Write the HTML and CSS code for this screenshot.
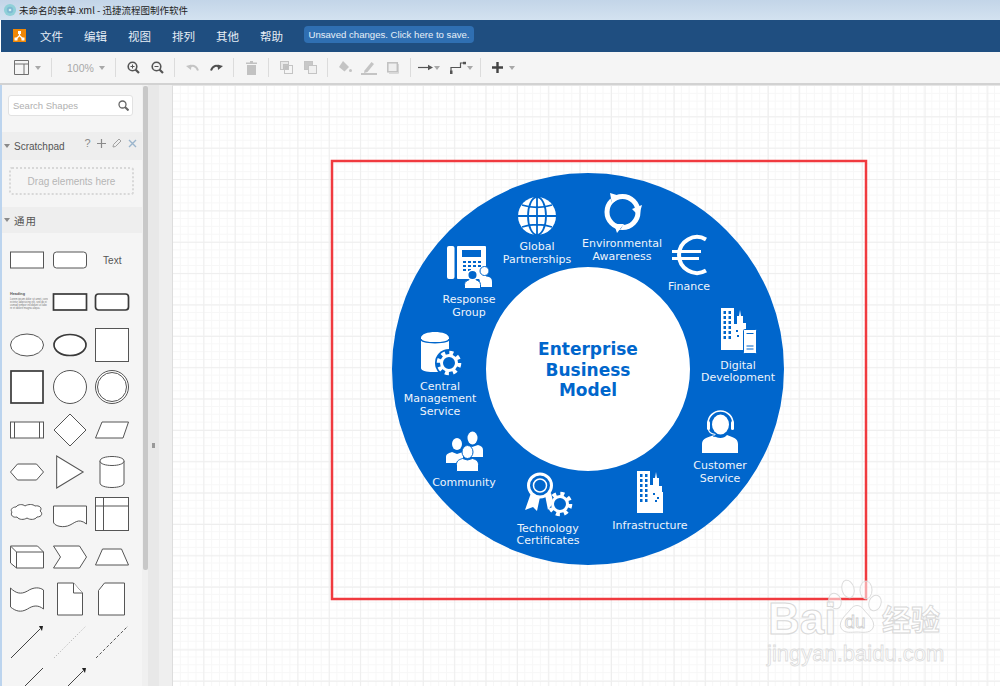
FILE: index.html
```html
<!DOCTYPE html>
<html lang="zh">
<head>
<meta charset="utf-8">
<title>未命名的表单.xml - 迅捷流程图制作软件</title>
<link rel="stylesheet" href="styles.css">
</head>
<body>
<div class="app">
  <header class="titlebar">
    <svg class="app-icon" width="14" height="14" viewBox="0 0 15 15"><circle cx="7.5" cy="7.5" r="6.5" fill="#8fd0d8"/><circle cx="7.5" cy="7.5" r="3.4" fill="#7fb9d2"/><circle cx="7.5" cy="7.5" r="1.4" fill="#d5eef2"/></svg>
    <span>未命名的表单.xml - 迅捷流程图制作软件</span>
  </header>
  <nav class="menubar">
    <svg class="logo" width="13" height="13" viewBox="0 0 13 13"><rect width="13" height="13" fill="#f08705"/><path d="M6.5 3.5V6.5M6.5 6.5L3 10M6.5 6.5L10 10" stroke="#fff" stroke-width="1.2" fill="none"/><rect x="5" y="2" width="3" height="3" fill="#fff"/><rect x="1.5" y="8.5" width="3" height="3" fill="#fff"/><rect x="8.5" y="8.5" width="3" height="3" fill="#fff"/></svg>
    <ul class="menu">
      <li>文件</li><li>编辑</li><li>视图</li><li>排列</li><li>其他</li><li>帮助</li>
    </ul>
    <button class="save-btn">Unsaved changes. Click here to save.</button>
  </nav>
  <div class="toolbar">
    <div class="tb w-view">
      <svg width="15" height="15" viewBox="0 0 15 15"><path d="M.5.5h14v14H.5zM.5 4h14M10 4v10.500" fill="none" stroke="#707070"/></svg><i class="caret"></i>
    </div>
    <i class="sep"></i>
    <div class="tb w-zoom"><span class="zoom-text">100%</span><i class="caret"></i></div>
    <i class="sep"></i>
    <div class="tb"><svg width="13" height="13" viewBox="0 0 13 13"><circle cx="5.500" cy="5.500" r="4.300" fill="none" stroke="#555" stroke-width="1.600"/><path d="M8.500 8.500L12 12" stroke="#555" stroke-width="2.200"/><path d="M3.500 5.500h4M5.500 3.500v4" stroke="#555"/></svg></div>
    <div class="tb"><svg width="13" height="13" viewBox="0 0 13 13"><circle cx="5.500" cy="5.500" r="4.300" fill="none" stroke="#555" stroke-width="1.600"/><path d="M8.500 8.500L12 12" stroke="#555" stroke-width="2.200"/><path d="M3.500 5.500h4" stroke="#555"/></svg></div>
    <i class="sep"></i>
    <div class="tb"><svg width="13" height="9" viewBox="0 0 13 9"><path d="M3.500 4.500C6 1.800 10 2 12 7.500" fill="none" stroke="#c4c4c4" stroke-width="2"/><path d="M0 3l5.500-1.500L5 7z" fill="#c4c4c4"/></svg></div>
    <div class="tb"><svg width="13" height="9" viewBox="0 0 13 9"><path d="M9.500 4.500C7 1.800 3 2 1 7.500" fill="none" stroke="#4f4f4f" stroke-width="2"/><path d="M13 3L7.500 1.500 8 7z" fill="#4f4f4f"/></svg></div>
    <i class="sep"></i>
    <div class="tb"><svg width="11" height="14" viewBox="0 0 11 14"><path d="M0 1.500h11v1.500H0zM4 0h3v1.500H4zM1 4h9v10H1z" fill="#c2c2c2"/></svg></div>
    <i class="sep"></i>
    <div class="tb"><svg width="13" height="13" viewBox="0 0 13 13"><rect x=".5" y=".5" width="8" height="8" fill="#e8e8e8" stroke="#c4c4c4"/><rect x="3" y="3" width="5.500" height="5.500" fill="#c0c0c0"/><rect x="4.500" y="4.500" width="8" height="8" fill="none" stroke="#c4c4c4"/></svg></div>
    <div class="tb"><svg width="13" height="13" viewBox="0 0 13 13"><rect x=".5" y=".5" width="8" height="8" fill="#c8c8c8" stroke="#c4c4c4"/><rect x="4.500" y="4.500" width="8" height="8" fill="#f0f0f0" stroke="#c4c4c4"/></svg></div>
    <i class="sep"></i>
    <div class="tb"><svg width="13" height="13" viewBox="0 0 13 13"><path d="M4 0l6 6-4.500 4.500L0 6z" fill="#c4c4c4"/><circle cx="11.500" cy="9.500" r="1.500" fill="#c4c4c4"/></svg></div>
    <div class="tb"><svg width="16" height="14" viewBox="0 0 16 14"><path d="M3.500 9.500L10.500 1l2.500 2-6.500 8L3 12z" fill="#c4c4c4"/><path d="M0 13h16" stroke="#c4c4c4" stroke-width="2"/></svg></div>
    <div class="tb"><svg width="12" height="12" viewBox="0 0 12 12"><rect x=".8" y=".8" width="9.500" height="9" fill="#efefef" stroke="#c0c0c0" stroke-width="1.500"/><path d="M2 11.300h9.500V2" fill="none" stroke="#d4d4d4"/></svg></div>
    <i class="sep"></i>
    <div class="tb w-arrow"><svg width="15" height="7" viewBox="0 0 15 7"><path d="M0 3.500h11" stroke="#555" stroke-width="1.200"/><path d="M10 .8l5 2.700-5 2.700z" fill="#555"/></svg><i class="caret"></i></div>
    <div class="tb w-way"><svg width="16" height="13" viewBox="0 0 16 13"><path d="M1 12V6.500h9.500V2H15" fill="none" stroke="#555" stroke-width="1.200"/><rect y="9.500" width="2.500" height="3.500" fill="#555"/><rect x="13" y=".8" width="3" height="2.500" fill="#555"/></svg><i class="caret"></i></div>
    <i class="sep"></i>
    <div class="tb w-plus"><svg width="11" height="11" viewBox="0 0 11 11"><path d="M5.500 0v11M0 5.500h11" stroke="#444" stroke-width="2.400"/></svg><i class="caret"></i></div>
  </div>
  <main class="main">
    <aside class="sidebar">
      <div class="search">
        <span>Search Shapes</span>
        <svg width="11" height="11" viewBox="0 0 11 11"><circle cx="4.500" cy="4.500" r="3.500" fill="none" stroke="#666" stroke-width="1.300"/><path d="M7 7l3.500 3.500" stroke="#666" stroke-width="2"/></svg>
      </div>
      <section class="group-head scratch-head">
        <i class="tri"></i><span>Scratchpad</span>
        <div class="scratch-tools">
          <span>?</span>
          <svg width="9" height="9" viewBox="0 0 9 9"><path d="M4.500 0v9M0 4.500h9" stroke="#8a8a8a" stroke-width="1.200"/></svg>
          <svg width="10" height="10" viewBox="0 0 10 10"><path d="M1 9l.5-2.500L7 1l2 2-5.500 5.500z" fill="none" stroke="#a0a0a0"/></svg>
          <svg width="9" height="9" viewBox="0 0 9 9"><path d="M1 1l7 7M8 1L1 8" stroke="#9bb5cc" stroke-width="1.400"/></svg>
        </div>
      </section>
      <div class="dropzone">Drag elements here</div>
      <section class="group-head general-head"><i class="tri"></i><span class="cjk">通用</span></section>
      <div class="shapes">
        <svg class="shape" viewBox="0 0 42 42"><rect x="4.500" y="13" width="33" height="16"/></svg>
        <svg class="shape" viewBox="0 0 42 42"><rect x="4.500" y="13" width="33" height="16" rx="3"/></svg>
        <div class="shape-text">Text</div>

        <svg class="shape" viewBox="0 0 42 42"><text class="tiny-h" x="4" y="14">Heading</text><text class="tiny" x="4" y="19">Lorem ipsum dolor sit amet, cons</text><text class="tiny" x="4" y="22">ectetur adipisicing elit, sed do ei</text><text class="tiny" x="4" y="25">usmod tempor incididunt ut labo</text><text class="tiny" x="4" y="28">re et dolore magna aliqua.</text></svg>
        <svg class="shape" viewBox="0 0 42 42"><rect class="thick" x="4.500" y="13" width="33" height="16"/></svg>
        <svg class="shape" viewBox="0 0 42 42"><rect class="thick" x="4.500" y="13" width="33" height="16" rx="3"/></svg>

        <svg class="shape" viewBox="0 0 42 42"><ellipse cx="21" cy="21" rx="16.500" ry="11"/></svg>
        <svg class="shape" viewBox="0 0 42 42"><ellipse class="thick" cx="21" cy="21" rx="16" ry="10.500"/></svg>
        <svg class="shape" viewBox="0 0 42 42"><rect x="4.500" y="4.500" width="33" height="33"/></svg>

        <svg class="shape" viewBox="0 0 42 42"><rect class="thick" x="5" y="5" width="32" height="32"/></svg>
        <svg class="shape" viewBox="0 0 42 42"><circle cx="21" cy="21" r="16.500"/></svg>
        <svg class="shape" viewBox="0 0 42 42"><circle cx="21" cy="21" r="16.500"/><circle cx="21" cy="21" r="14.500"/></svg>

        <svg class="shape" viewBox="0 0 42 42"><rect x="4.500" y="13" width="33" height="16"/><path d="M8.500 13v16M33.500 13v16"/></svg>
        <svg class="shape" viewBox="0 0 42 42"><path d="M21 5l16 16-16 16L5 21z"/></svg>
        <svg class="shape" viewBox="0 0 42 42"><path d="M4.500 29L11 13h26.500L32 29z"/></svg>

        <svg class="shape" viewBox="0 0 42 42"><path d="M4.500 21l7-8h19l7 8-7 8h-19z"/></svg>
        <svg class="shape" viewBox="0 0 42 42"><path d="M8 5l26 16L8 37z" transform="translate(-.500 0) scale(1.020 1)"/></svg>
        <svg class="shape" viewBox="0 0 42 42"><path d="M9 10c0-6 24-6 24 0v22c0 6-24 6-24 0z"/><path d="M9 10c0 6 24 6 24 0"/></svg>

        <svg class="shape" viewBox="0 0 42 42"><path d="M10 14c2-3 7-3 9-1 3-2 8-2 10 0 4-1 8 2 5 5 3 2 2 6-3 6-2 3-7 3-10 1-3 2-8 2-10-1-4 1-7-2-5-5-2-2 0-5 4-5z"/></svg>
        <svg class="shape" viewBox="0 0 42 42"><path d="M4.500 13h33v18c-9-7-12 0-19 2s-14-1-14-4z"/></svg>
        <svg class="shape" viewBox="0 0 42 42"><rect x="4.500" y="4.500" width="33" height="33"/><path d="M12.500 4.500v33M4.500 13h33"/></svg>

        <svg class="shape" viewBox="0 0 42 42"><path d="M4.500 10h27l6 6v16h-27l-6-5z"/><path d="M4.500 10l6 6v16M10.500 16h27"/></svg>
        <svg class="shape" viewBox="0 0 42 42"><path d="M4.500 10h26l7 11-7 11h-26l7-11z"/></svg>
        <svg class="shape" viewBox="0 0 42 42"><path d="M4.500 29l7-16h19l7 16z"/></svg>

        <svg class="shape" viewBox="0 0 42 42"><path d="M4.500 10c5 5 10 7 17 3 6-4 12-4 16-1v19c-5-4-10-4-16 0-7 4-12 2-17-2z"/></svg>
        <svg class="shape" viewBox="0 0 42 42"><path d="M8.500 5h16l9 10v22h-25z"/><path d="M24.500 5v10h9"/></svg>
        <svg class="shape" viewBox="0 0 42 42"><path d="M17.500 5h20v32h-26V12.500z" transform="translate(-4 0)"/></svg>

        <svg class="shape" viewBox="0 0 42 42"><path class="line" d="M5 37L34 8"/><path class="head" d="M34 5l4 0-1 5-2-3z" transform="translate(-1 0)"/></svg>
        <svg class="shape" viewBox="0 0 42 42"><path class="dotted" d="M5 37L37 5"/></svg>
        <svg class="shape" viewBox="0 0 42 42"><path class="dashed" d="M5 37L37 5"/></svg>

        <svg class="shape" viewBox="0 0 42 42"><path class="line" d="M5 37L37 5"/></svg>
        <svg class="shape" viewBox="0 0 42 42"><path class="line" d="M5 37L34 8"/><path class="head" d="M34 5l4 0-1 5-2-3z" transform="translate(-1 0)"/></svg>
      </div>
    </aside>
    <div class="scrollbar"><div class="thumb"></div></div>
    <div class="splitter"><i class="grip"></i></div>
    <div class="margin"></div>
    <div class="canvas">
      <svg class="diagram" viewBox="172 86 828 600" width="828" height="600">
        <defs>
          <g id="gear">
            <circle r="9.800" class="gear-teeth"/>
            <circle r="7.500" class="gear-ring"/>
          </g>
        </defs>
        <rect class="frame" x="332" y="161" width="534" height="438"/>
        <circle class="ring" cx="588" cy="369" r="149"/>

        <!-- Global -->
        <g>
          <circle cx="537" cy="216" r="19" fill="#fff"/>
          <g class="cut">
            <ellipse cx="537" cy="216" rx="9" ry="19"/>
            <path d="M537 197v38M518 216h38M522 205c9 3 21 3 30 0M522 227c9-3 21-3 30 0"/>
          </g>
        </g>
        <!-- Recycle -->
        <g>
          <circle class="wstroke" cx="622.500" cy="212" r="15.500" stroke-width="5"/>
          <path d="M611 198l3 8M638 209l-8 3M620 229l4-7" stroke="#0066cc" stroke-width="1.300"/>
          <path fill="#fff" d="M610 193l10 3-8 8zM642 205l-3 11-7-7zM617 233l-3-9 10 0z"/>
        </g>
        <!-- Euro -->
        <g>
          <path class="wstroke" d="M706 239.400a18 18 0 1 0 0 31.200" stroke-width="4"/>
          <path class="wstroke" d="M672 251.500h29M672 258.500h27" stroke-width="3"/>
        </g>
        <!-- Digital Development -->
        <g>
          <rect x="721" y="308" width="13" height="42" fill="#fff"/>
          <path fill="#fff" d="M734 350v-26h3v-8h2l1-6 1 6h2v7h3v7h-2v20z"/>
          <path class="win" d="M723.500 311h2.500v3h-2.500zM728.500 311h2.500v3h-2.500zM723.500 316h2.500v3h-2.500zM728.500 316h2.500v3h-2.500zM723.500 321h2.500v3h-2.500zM728.500 321h2.500v3h-2.500zM723.500 326h2.500v3h-2.500zM728.500 326h2.500v3h-2.500zM723.500 331h2.500v3h-2.500zM728.500 331h2.500v3h-2.500zM723.500 336h2.500v3h-2.500zM728.500 336h2.500v3h-2.500zM736 330h2v2h-2zM737 335h2v2h-2z"/>
          <rect x="743.500" y="329.500" width="13" height="24" rx="1" fill="#fff" stroke="#0066cc"/>
          <path d="M746.500 333.500h7M746.500 346h7M746.500 349h7" stroke="#0066cc"/>
        </g>
        <!-- Customer Service -->
        <g>
          <path class="wstroke" d="M708 423.500a12.500 12.500 0 0 1 25 0" stroke-width="1.600"/>
          <rect x="707" y="421" width="3" height="9" rx="1.500" fill="#fff"/>
          <rect x="731" y="421" width="3" height="9" rx="1.500" fill="#fff"/>
          <ellipse cx="720.500" cy="424.500" rx="8.500" ry="10" fill="#fff"/>
          <path class="wstroke" d="M708.500 429c0 3 3 5 7 5.500" stroke-width="1.200"/>
          <path fill="#fff" d="M702 453v-9c0-6 7-7 12-9 3 4 10 4 13 0 5 2 11 3 11 9v9z"/>
          <path d="M713 436c4 1 6 1 9 0" stroke="#0066cc" fill="none"/>
        </g>
        <!-- Infrastructure -->
        <g>
          <rect x="637" y="471" width="13" height="42" fill="#fff"/>
          <path fill="#fff" d="M650 513v-28h3v-7h2l1-6 1 6h2v8h3v6h1v21z"/>
          <path class="win" d="M640 474h2.500v3H640zM645 474h2.500v3H645zM640 479h2.500v3H640zM645 479h2.500v3H645zM640 484h2.500v3H640zM645 484h2.500v3H645zM640 489h2.500v3H640zM645 489h2.500v3H645zM640 494h2.500v3H640zM645 494h2.500v3H645zM640 499h2.500v3H640zM645 499h2.500v3H645zM653 493h2v2h-2zM657 497h2v2h-2zM655 500h2v2h-2z"/>
        </g>
        <!-- Technology Certificates -->
        <g>
          <path fill="#fff" d="M531 493l-6 17 8-3 4 4 3-14zM545 495l3 15 3-4 2-5-2-8z"/>
          <circle cx="540" cy="485.500" r="11.500" class="rosette"/>
          <circle cx="540" cy="485.500" r="6.500" class="rosette-in"/>
          <use href="#gear" x="560" y="504"/>
        </g>
        <!-- Community -->
        <g>
          <path fill="#fff" d="M446 463v-6c0-3 3-4 6-5l5 2 6-2v11zM466 445l6 2 6-2c3 1 5 2 5 5v7h-17z"/>
          <ellipse cx="457" cy="444" rx="5" ry="6" fill="#fff"/>
          <ellipse cx="472.500" cy="438" rx="5" ry="6.500" fill="#fff"/>
          <path fill="#fff" stroke="#0066cc" d="M456.500 471.500v-7c0-4 3-5 6-6l5 1.500 5-1.500c3 1 6 2 6 6v7z"/>
          <ellipse cx="467.500" cy="452" rx="5.500" ry="6.500" fill="#fff" stroke="#0066cc"/>
        </g>
        <!-- Central Management -->
        <g>
          <path fill="#fff" d="M421 338c0-8 28-8 28 0v32h-1c-10 3-27 3-27-2z"/>
          <path d="M421 339c0 5 28 5 28 0" fill="none" stroke="#0066cc" stroke-width="1.300"/>
          <circle cx="449" cy="363" r="14" fill="#0066cc"/>
          <use href="#gear" x="449" y="363"/>
        </g>
        <!-- Response Group -->
        <g>
          <rect x="447" y="246" width="7.500" height="33" rx="2" fill="#fff"/>
          <rect x="457" y="246" width="29" height="33" rx="1" fill="#fff"/>
          <rect x="462" y="250" width="19" height="7" fill="#0066cc"/>
          <path class="win" d="M463 261h3v2h-3zM468 261h3v2h-3zM473 261h3v2h-3zM478 261h3v2h-3zM463 265h3v2h-3zM468 265h3v2h-3zM473 265h3v2h-3zM478 265h3v2h-3zM463 269h3v2h-3zM468 269h3v2h-3z"/>
          <path fill="#fff" d="M480 287v-5c0-3-2-4-3-5l7-1 5 1c2 1 3 2 3 5v5z"/>
          <circle cx="484.500" cy="271" r="4.500" fill="#fff" stroke="#0066cc"/>
          <path fill="#fff" stroke="#0066cc" d="M464.500 288.500v-4c0-3 3-4 5-5h6c2 1 5 2 5 5v4z"/>
          <circle cx="472.500" cy="275" r="4.800" fill="#0066cc" stroke="#fff" stroke-width="1.500"/>
        </g>

        <text class="label" x="537" y="250">Global</text>
        <text class="label" x="537" y="262.500">Partnerships</text>
        <text class="label" x="622" y="247">Environmental</text>
        <text class="label" x="622" y="259.500">Awareness</text>
        <text class="label" x="689" y="290">Finance</text>
        <text class="label" x="469" y="303">Response</text>
        <text class="label" x="469" y="315.500">Group</text>
        <text class="label" x="738" y="369">Digital</text>
        <text class="label" x="738" y="381">Development</text>
        <text class="label" x="440" y="389.500">Central</text>
        <text class="label" x="440" y="402">Management</text>
        <text class="label" x="440" y="414.500">Service</text>
        <text class="label" x="464" y="486">Community</text>
        <text class="label" x="720" y="469">Customer</text>
        <text class="label" x="720" y="481.500">Service</text>
        <text class="label" x="650" y="529">Infrastructure</text>
        <text class="label" x="548" y="532">Technology</text>
        <text class="label" x="548" y="544">Certificates</text>
        <text class="title" x="588" y="355">Enterprise</text>
        <text class="title" x="588" y="375.500">Business</text>
        <text class="title" x="588" y="396">Model</text>

        <g class="paw">
          <ellipse cx="848" cy="589" rx="6" ry="9" transform="rotate(-15 848 589)"/>
          <ellipse cx="866" cy="590" rx="6" ry="9"/>
          <ellipse cx="835" cy="601" rx="6" ry="8" transform="rotate(-20 835 601)"/>
          <ellipse cx="875" cy="603" rx="6" ry="8" transform="rotate(20 875 603)"/>
          <path d="M850 610c4-6 10-6 14 0 4 5 12 11 9 18-3 6-12 4-16 4-5 0-13 2-16-4-3-7 5-13 9-18z"/>
        </g>
        <text class="wm-du" x="855" y="628">du</text>
        <text class="wm-big" x="768" y="634">Bai</text>
        <text class="wm-cn" x="882" y="631">经验</text>
        <text class="wm-url" x="767" y="661">jingyan.baidu.com</text>
      </svg>
    </div>
  </main>
</div>
</body>
</html>
```

FILE: styles.css
```css
* { box-sizing: border-box; }
html, body { margin: 0; padding: 0; height: 100%; overflow: hidden; }
body { font-family: "Liberation Sans", Arial, "Noto Sans CJK SC", sans-serif; background: #fff; }
.app { display: flex; flex-direction: column; width: 1000px; height: 686px; overflow: hidden; }

.titlebar {
  height: 20px; flex: none; display: flex; align-items: center; gap: 2px; padding-left: 3px;
  background: linear-gradient(#c3d5e8, #d3e2f0);
  font: 9.500px "Noto Sans CJK SC", "Liberation Sans", sans-serif; color: #222;
}
.app-icon { flex: none; }

.menubar {
  height: 32px; flex: none; display: flex; align-items: center; margin-left: 1px;
  background: #1f4e80; padding: 0 0 1px 12px;
}
.logo { flex: none; }
.menu { list-style: none; display: flex; margin: 0 0 0 14px; padding: 0; }
.menu li { width: 44px; font: 11.500px "Noto Sans CJK SC", sans-serif; color: #e6edf5; }
.save-btn {
  position: relative; top: -1px; margin-left: 0;
  width: 170px; height: 17px; padding: 0; border: 0; border-radius: 4px;
  background: #2f6fb2; color: #e8f0f8;
  font: 9.600px "Liberation Sans", sans-serif; white-space: nowrap; text-align: center;
}

.toolbar {
  height: 33px; flex: none; display: flex; align-items: center; padding: 0 0 0 9px;
  background: #f5f5f5; border-bottom: 2px solid #d2d2d2;
}
.tb { width: 24px; height: 20px; flex: none; display: flex; align-items: center; justify-content: center; gap: 6px; }
.w-view { width: 37px; }
.w-zoom { width: 53px; gap: 5px; justify-content: flex-start; padding-left: 10px; }
.w-arrow { width: 31px; gap: 1px; justify-content: flex-start; padding-left: 2px; }
.w-way { width: 28px; gap: 1px; }
.w-plus { width: 34px; gap: 6px; }
.zoom-text { font-size: 10.500px; color: #a8a8a8; }
.caret { width: 0; height: 0; border: 3.500px solid transparent; border-top: 4px solid #a8a8a8; border-bottom: 0; }
.sep { width: 1px; height: 19px; flex: none; background: #dcdcdc; margin: 0 5px; }

.main { flex: 1; display: flex; min-height: 0; }
.sidebar {
  width: 142px; flex: none; background: #f5f5f5; border-left: 2px solid #bcd4ee;
  display: flex; flex-direction: column; overflow: hidden;
}
.search {
  margin: 10px 0 0 6px; width: 125px; height: 21px; flex: none;
  display: flex; align-items: center; justify-content: space-between; padding: 0 3px 1px 4px;
  background: #fff; border: 1px solid #e2e2e2; border-radius: 3px;
  font-size: 9.500px; color: #b0b0b0;
}
.group-head { display: flex; align-items: center; background: #eeeeee; color: #555; flex: none; padding-left: 2px; }
.scratch-head { height: 28px; margin-top: 16px; font-size: 10px; position: relative; }
.general-head { height: 26px; margin-top: 12px; font-size: 10.500px; }
.cjk { font-family: "Noto Sans CJK SC", sans-serif; letter-spacing: 1px; }
.tri { width: 0; height: 0; margin-right: 4px; border: 3.500px solid transparent; border-top: 4px solid #8a8a8a; border-bottom: 0; }
.scratch-tools { margin-left: 20px; display: flex; align-items: center; gap: 6px; position: relative; top: -3px; color: #8a8a8a; font-size: 11px; }
.dropzone {
  margin: 7px 0 0 7px; width: 125px; height: 28px; flex: none; display: flex; align-items: center; justify-content: center;
  border: 2px dotted #d8d8d8; border-radius: 3px; font-size: 10px; color: #b5b5b5;
}
.shapes { display: grid; grid-template-columns: repeat(3, 42.500px); grid-auto-rows: 42.400px; margin: 6px 0 0 4px; flex: none; }
.shape { width: 42px; height: 42px; display: block; }
.shape rect, .shape ellipse, .shape circle, .shape path { fill: #fff; stroke: #555; stroke-width: 1; }
.shape .thick { stroke: #3a3a3a; stroke-width: 1.700; }
.shape .line { fill: none; stroke: #444; }
.shape .head { fill: #222; stroke: none; }
.shape .dotted { fill: none; stroke: #aaa; stroke-dasharray: 1 2; }
.shape .dashed { fill: none; stroke: #555; stroke-dasharray: 3 2; }
.shape-text { display: flex; align-items: center; justify-content: center; font-size: 10px; color: #555; }
.tiny-h { font: bold 3.800px "Liberation Sans", sans-serif; fill: #555; }
.tiny { font: 2.600px "Liberation Sans", sans-serif; fill: #777; }

.scrollbar { width: 6px; flex: none; background: #f0f0f0; position: relative; }
.thumb { position: absolute; top: 1px; left: 1px; width: 5px; height: 484px; background: #c8c8c8; border-radius: 2px; }
.splitter { width: 11px; flex: none; background: #e8e8e8; position: relative; }
.grip { position: absolute; left: 4px; top: 358px; width: 3px; height: 5px; background: #999; }
.margin { width: 13px; flex: none; background: #efefef; }
.canvas {
  flex: 1; position: relative; overflow: hidden; background-color: #fff;
  border-left: 1px solid #dddddd; border-top: 1px solid #e6e6e6;
  background-image:
    linear-gradient(#eeeeee 1px, transparent 1px),
    linear-gradient(90deg, #eeeeee 1px, transparent 1px),
    linear-gradient(#f7f7f7 1px, transparent 1px),
    linear-gradient(90deg, #f7f7f7 1px, transparent 1px);
  background-size: 31.360px 31.360px, 31.360px 31.360px, 7.840px 7.840px, 7.840px 7.840px;
  background-position: -1px -1px;
}
.diagram { position: absolute; left: -1px; top: 0; display: block; }
.frame { fill: none; stroke: #f03a3f; stroke-width: 2.500; }
.ring { fill: #fff; stroke: #0066cc; stroke-width: 94; }
.cut { fill: none; stroke: #0066cc; stroke-width: 1.800; }
.wstroke { fill: none; stroke: #fff; }
.win { fill: #0066cc; }
.rosette { fill: #0066cc; stroke: #fff; stroke-width: 3; }
.rosette-in { fill: #0066cc; stroke: #fff; stroke-width: 1.500; }
.gear-teeth { fill: none; stroke: #fff; stroke-width: 5; stroke-dasharray: 3.800 3.900; }
.gear-ring { fill: #0066cc; stroke: #fff; stroke-width: 3; }
.label { font: 11px "DejaVu Sans", sans-serif; fill: #eef4fb; text-anchor: middle; }
.title { font: bold 17px "DejaVu Sans", sans-serif; fill: #0066cc; text-anchor: middle; }
.paw { fill: rgba(255,255,255,.55); stroke: #dcdcdc; stroke-width: 1; }
.wm-du { font: 19px "Liberation Sans", sans-serif; fill: rgba(255,255,255,.6); stroke: #cfcfcf; stroke-width: .8; text-anchor: middle; }
.wm-big { font: bold 44px "Liberation Sans", sans-serif; fill: rgba(255,255,255,.6); stroke: #d8d8d8; stroke-width: 1; }
.wm-cn { font: bold 29px "Noto Sans CJK SC", sans-serif; fill: rgba(255,255,255,.6); stroke: #d8d8d8; stroke-width: 1; }
.wm-url { font: 22px "Liberation Sans", sans-serif; fill: rgba(255,255,255,.6); stroke: #dcdcdc; stroke-width: .8; }
```
